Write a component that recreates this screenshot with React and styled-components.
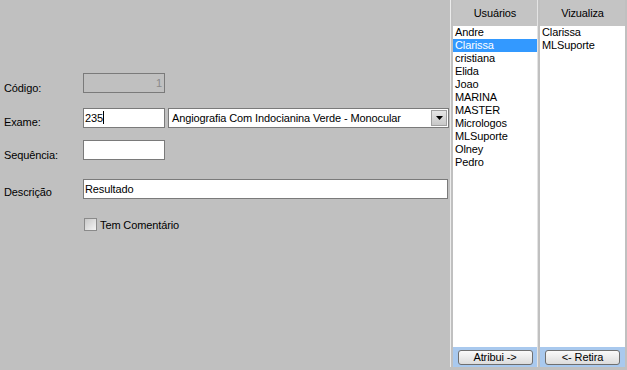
import React from "react";
import styled, { createGlobalStyle } from "styled-components";

const GlobalStyle = createGlobalStyle`
  html, body {
    margin: 0;
    padding: 0;
    background: #c0c0c0;
  }
  body {
    font-family: "Liberation Sans", Arial, sans-serif;
    font-size: 11px;
    letter-spacing: -0.12px;
    color: #000;
  }
`;

const Window = styled.div`
  display: flex;
  width: 627px;
  height: 370px;
  background: #c0c0c0;
  overflow: hidden;
`;

const Form = styled.div`
  width: 450px;
  padding-top: 73px;
  display: flex;
  flex-direction: column;
`;

const Row = styled.div`
  display: flex;
  align-items: flex-start;
  height: ${props => props.h || 20}px;
  margin-top: ${props => props.mt || 0}px;
`;

const Label = styled.div`
  width: 83px;
  padding-left: 4px;
  padding-top: ${props => props.pad || 8}px;
  box-sizing: border-box;
  line-height: 13px;
`;

const TextBox = styled.div`
  box-sizing: border-box;
  width: ${props => props.w}px;
  height: 20px;
  border: 1px solid #7a7a7a;
  background: ${props => (props.disabled ? "#c0c0c0" : "#fff")};
  color: ${props => (props.disabled ? "#8a8a8a" : "#000")};
  text-align: ${props => (props.disabled ? "right" : "left")};
  padding: 2px 2px 0 1px;
  line-height: 14px;
  white-space: nowrap;
  overflow: hidden;
`;

const Caret = styled.span`
  display: inline-block;
  width: 1px;
  height: 13px;
  background: #000;
  vertical-align: -2px;
`;

const Select = styled.div`
  box-sizing: border-box;
  display: flex;
  align-items: center;
  width: 281px;
  height: 20px;
  margin-left: 3px;
  border: 1px solid #7a7a7a;
  background: #fff;
  padding: 1px;
`;

const SelectText = styled.div`
  flex: 1;
  padding-left: 2px;
  white-space: nowrap;
`;

const DropButton = styled.div`
  box-sizing: border-box;
  width: 16px;
  height: 16px;
  display: flex;
  align-items: center;
  justify-content: center;
  background: linear-gradient(#e6e6e6, #c8c8c8);
  border: 1px solid #a0a0a0;
`;

const CheckRow = styled.div`
  display: flex;
  align-items: center;
  height: 13px;
  margin-top: 19px;
  padding-left: 84px;
`;

const Check = styled.div`
  box-sizing: border-box;
  width: 13px;
  height: 13px;
  border: 1px solid #8a8a8a;
  background: linear-gradient(135deg, #c8c8c8, #f4f4f4);
`;

const CheckLabel = styled.span`
  margin-left: 3px;
`;

const Panel = styled.div`
  display: flex;
  width: 176px;
  height: 367px;
  margin-left: 1px;
  border-left: 1px solid #ececec;
  padding-left: 2px;
`;

const Column = styled.div`
  display: flex;
  flex-direction: column;
  width: ${props => props.w}px;
  border-left: ${props => (props.divider ? "1px solid #e4e4e4" : "none")};
  padding-left: ${props => (props.divider ? 2 : 0)}px;
`;

const Header = styled.div`
  height: 26px;
  display: flex;
  align-items: center;
  justify-content: center;
  background: #c4c4c4;
`;

const List = styled.div`
  flex: 1;
  background: #fff;
  padding-top: 0px;
`;

const Item = styled.div`
  height: 13px;
  line-height: 13px;
  padding-left: 2px;
  background: ${props => (props.selected ? "#3399ff" : "transparent")};
  color: ${props => (props.selected ? "#fff" : "#000")};
`;

const ButtonBar = styled.div`
  height: 20px;
  display: flex;
  align-items: center;
  justify-content: center;
  background: #a9c9ee;
`;

const Button = styled.div`
  box-sizing: border-box;
  width: 75px;
  height: 15px;
  border: 1px solid #6f6f6f;
  border-radius: 3px;
  background: linear-gradient(#fafafa, #dcdcdc);
  text-align: center;
  line-height: 13px;
`;

const usuarios = [
  "Andre",
  "Clarissa",
  "cristiana",
  "Elida",
  "Joao",
  "MARINA",
  "MASTER",
  "Micrologos",
  "MLSuporte",
  "Olney",
  "Pedro",
];

const vizualiza = ["Clarissa", "MLSuporte"];

export default function App() {
  return (
    <>
      <GlobalStyle />
      <Window>
        <Form>
          <Row>
            <Label pad={9}>Código:</Label>
            <TextBox w={82} disabled>1</TextBox>
          </Row>
          <Row mt={15}>
            <Label pad={8}>Exame:</Label>
            <TextBox w={82}>
              235<Caret />
            </TextBox>
            <Select>
              <SelectText>Angiografia Com Indocianina Verde - Monocular</SelectText>
              <DropButton>
                <svg width="7" height="4" viewBox="0 0 7 4">
                  <path d="M0 0H7L3.5 4Z" fill="#000" />
                </svg>
              </DropButton>
            </Select>
          </Row>
          <Row mt={12}>
            <Label pad={9}>Sequência:</Label>
            <TextBox w={82} />
          </Row>
          <Row mt={19}>
            <Label pad={7}>Descrição</Label>
            <TextBox w={365}>Resultado</TextBox>
          </Row>
          <CheckRow>
            <Check />
            <CheckLabel>Tem Comentário</CheckLabel>
          </CheckRow>
        </Form>
        <Panel>
          <Column w={84}>
            <Header>Usuários</Header>
            <List>
              {usuarios.map(u => (
                <Item key={u} selected={u === "Clarissa"}>
                  {u}
                </Item>
              ))}
            </List>
            <ButtonBar>
              <Button>Atribui -&gt;</Button>
            </ButtonBar>
          </Column>
          <Column w={85} divider>
            <Header>Vizualiza</Header>
            <List>
              {vizualiza.map(u => (
                <Item key={u}>{u}</Item>
              ))}
            </List>
            <ButtonBar>
              <Button>&lt;- Retira</Button>
            </ButtonBar>
          </Column>
        </Panel>
      </Window>
    </>
  );
}
